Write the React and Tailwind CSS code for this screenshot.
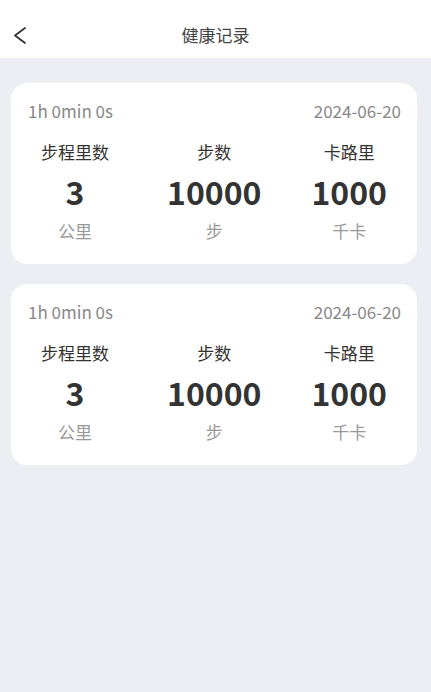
import React from 'react';

const records = [
    { duration: '1h 0min 0s', date: '2024-06-20', distance: 3, steps: 10000, calories: 1000 },
    { duration: '1h 0min 0s', date: '2024-06-20', distance: 3, steps: 10000, calories: 1000 },
];

function Stat({ label, value, unit, className = '' }) {
    return (
        <div className={`flex flex-col items-center ${className}`}>
            <div className="text-[17px] leading-[24px] text-[#333]">{label}</div>
            <div className="mt-[9px] text-[32px] leading-[36px] font-bold text-[#333]">{value}</div>
            <div className="mt-[11px] text-[17px] leading-[22px] text-[#999]">{unit}</div>
        </div>
    );
}

function RecordCard({ record }) {
    return (
        <div className="bg-white rounded-[16px] pl-[17px] pr-[16px] pt-[17px] pb-[22px]">
            <div className="flex justify-between text-[17px] leading-[22px] text-[#888]">
                <span>{record.duration}</span>
                <span>{record.date}</span>
            </div>
            <div className="flex justify-between pl-[13px] pr-[14px] mt-[18px]">
                <Stat label="步程里数" value={record.distance} unit="公里" />
                <Stat label="步数" value={record.steps} unit="步" className="pl-[8px]" />
                <Stat label="卡路里" value={record.calories} unit="千卡" />
            </div>
        </div>
    );
}

export default function App() {
    return (
        <div
            className="min-h-screen bg-[#edeef3]"
            style={{ fontFamily: '"Noto Sans CJK SC", "Noto Sans", sans-serif' }}
        >
            <div className="relative h-[58px] bg-white flex items-center justify-center">
                <button className="absolute left-[12px] top-[26px]">
                    <svg width="16" height="20" viewBox="0 0 16 20" fill="none">
                        <polyline points="13,2 3,9.5 13,17" stroke="#333" strokeWidth="1.8" strokeLinecap="round" strokeLinejoin="round" />
                    </svg>
                </button>
                <h1 className="text-[17px] leading-[22px] text-[#444] pt-[12px]">健康记录</h1>
            </div>
            <div className="flex flex-col gap-[20px] pl-[11px] pr-[14px] pt-[25px]">
                {records.map((r, i) => (
                    <RecordCard key={i} record={r} />
                ))}
            </div>
        </div>
    );
}
